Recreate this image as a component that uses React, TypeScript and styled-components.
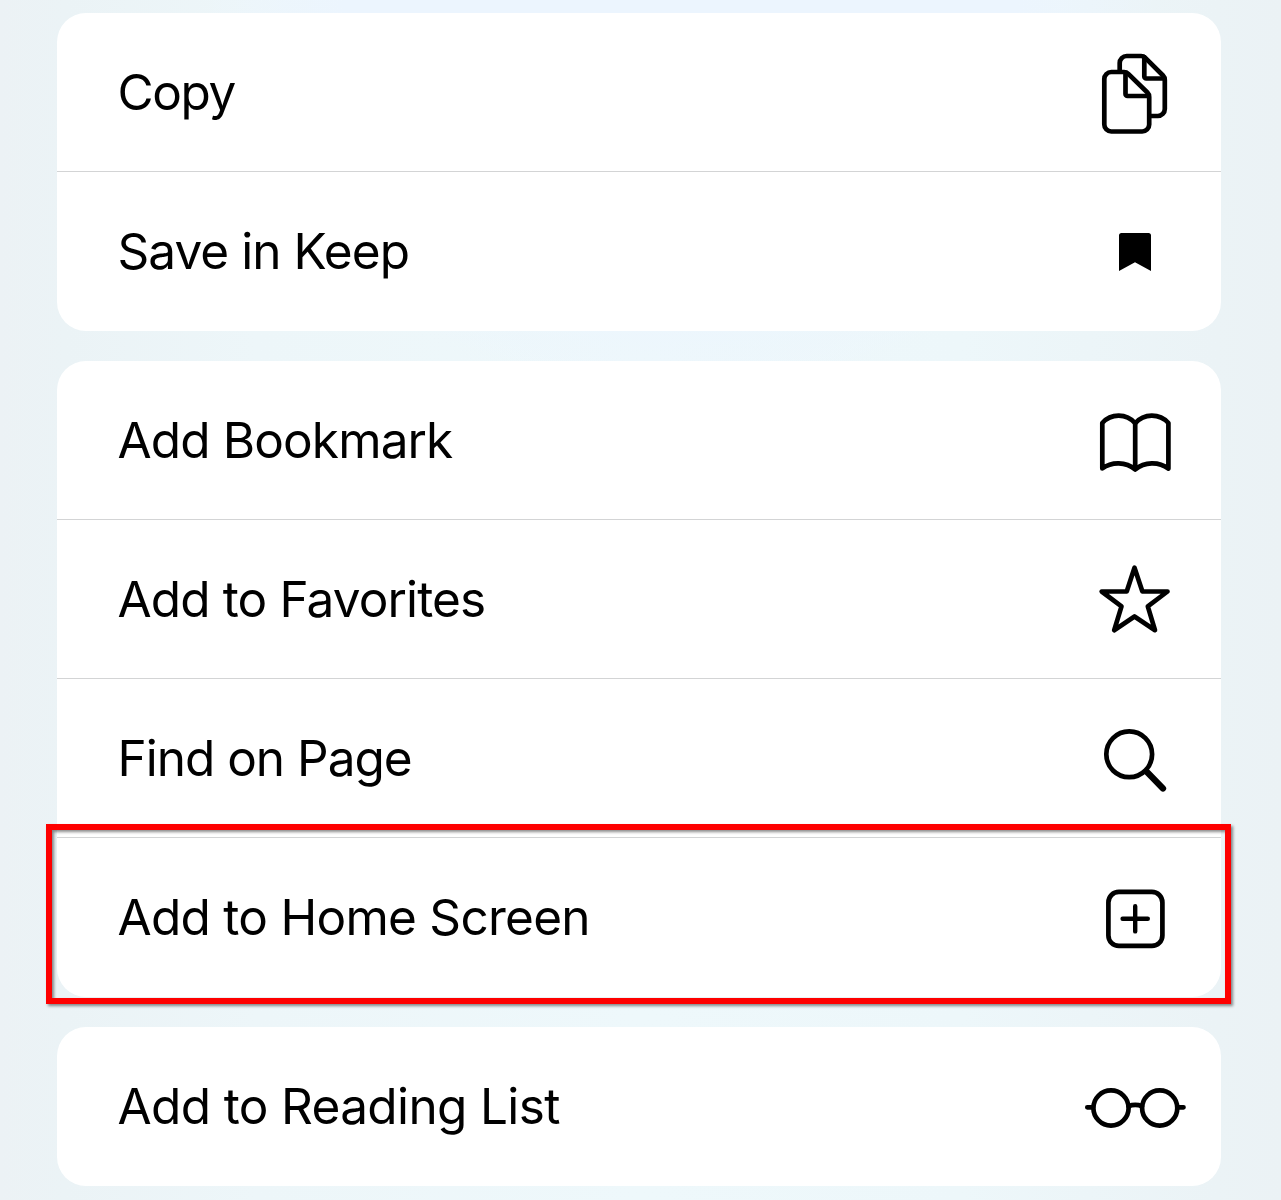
import React from "react";
import styled, { createGlobalStyle } from "styled-components";

const GlobalStyle = createGlobalStyle`
  * { box-sizing: border-box; }
  body { margin: 0; background: #edf5f8; }
`;

const Sheet = styled.main`
  display: flex;
  flex-direction: column;
  gap: 30px;
  height: 1200px;
  padding: 13px 60px 14px 57px;
  overflow: hidden;
  background:
    radial-gradient(ellipse 480px 400px at 680px 0, #ecf5fe 0%, #ecf5fe 70%, rgba(236, 245, 254, 0) 100%),
    linear-gradient(90deg, #ecf2f5 0%, #ebf3f6 5%, #edf6f9 20%, #eef8fb 50%, #edf7fa 75%, #ebf3f6 95%, #ebf2f5 100%);
  font-family: Inter, "Liberation Sans", sans-serif;
  color: #000;
`;

const Group = styled.section`
  flex: none;
  border-radius: 29px;
  background: #fff;
`;

const Row = styled.div`
  position: relative;
  display: flex;
  align-items: flex-start;
  justify-content: space-between;
  height: 159px;
  padding: 0 31px 0 60.5px;
  border-bottom: 1px solid #d3d4d5;

  &:last-child { border-bottom-color: transparent; }
`;

const Label = styled.span<{ $spacing: number }>`
  font-size: 49.5px;
  line-height: 158px;
  letter-spacing: ${(p) => p.$spacing}px;
  white-space: nowrap;
`;

const Glyph = styled.svg`
  flex: none;
  width: 110px;
  height: 158px;
  fill: none;
  stroke: #000;
  stroke-width: 4.7;
  stroke-linecap: round;
  stroke-linejoin: round;
`;

const Highlight = styled.div`
  position: absolute;
  inset: -14px -10px -8px -11px;
  border: 6px solid #fe0000;
  filter: drop-shadow(2px 2px 1.5px rgba(0, 0, 0, 0.45));
  pointer-events: none;
`;

const icons: Record<string, { top: number; art: React.ReactNode }> = {
  copy: {
    top: 27,
    art: (
      <>
        <path d="M39.7 30V23a7 7 0 0 1 7-7H61q2.500 0 4.300 1.800L83 35.500q1.800 1.800 1.800 4.500V69a7 7 0 0 1-7 7H71" />
        <path d="M64.300 17V36.500a2 2 0 0 0 2 2H84" />
        <path d="M31.300 32H44q2.500 0 4.300 1.800L67.400 52.500q1.800 1.800 1.800 4.500V84.500a7 7 0 0 1-7 7H31.300a7 7 0 0 1-7-7V39a7 7 0 0 1 7-7Z" />
        <path d="M45.500 33V54a2 2 0 0 0 2 2H68.500" />
      </>
    ),
  },
  keep: {
    top: 38,
    art: <path fill="#000" stroke="none" d="M41.500 23H68.500a2.500 2.500 0 0 1 2.500 2.500V61L55 52.300 39 61V25.500a2.500 2.500 0 0 1 2.500-2.500Z" />,
  },
  book: {
    top: 34,
    art: (
      <>
        <path d="M55.200 28.300C46.500 18.200 31 18.200 22.300 28V73.500C31.500 66.500 46 66.500 55.200 74.500C64.500 66.500 79 66.500 88.400 73.500V28C79.500 18.200 64 18.200 55.200 28.300Z" />
        <path d="M55.200 28V74" />
      </>
    ),
  },
  star: {
    top: 30,
    art: <path d="M54.500 17.700L62.300 41.300 87.500 41.500 67.800 56.400 75 80.200 54.500 66.500 34.200 80.200 41.500 56.400 21.700 41.500 46.800 41.300Z" />,
  },
  search: {
    top: 36,
    art: (
      <>
        <circle cx="49.200" cy="39.300" r="22.900" strokeWidth="4.700" />
        <path d="M67 57L83 73.500" strokeWidth="6.300" />
      </>
    ),
  },
  plus: {
    top: 32,
    art: (
      <>
        <rect x="28.400" y="21.900" width="54" height="54" rx="10.500" />
        <path d="M42.600 48.800H67.800M55.200 36.200V61.400" strokeWidth="4.400" />
      </>
    ),
  },
  glasses: {
    top: 43,
    art: (
      <>
        <circle cx="31" cy="38" r="17.600" />
        <circle cx="79.700" cy="38" r="17.600" />
        <path d="M48.500 36.200Q55.300 33.700 62 36.200M7.300 37.300H13M97.800 37.300H103.500" />
      </>
    ),
  },
};

const groups = [
  [
    { label: "Copy", icon: "copy", spacing: -1.4 },
    { label: "Save in Keep", icon: "keep", spacing: -0.95 },
  ],
  [
    { label: "Add Bookmark", icon: "book", spacing: -0.87 },
    { label: "Add to Favorites", icon: "star", spacing: -0.87 },
    { label: "Find on Page", icon: "search", spacing: -1 },
    { label: "Add to Home Screen", icon: "plus", spacing: -0.73, highlighted: true },
  ],
  [{ label: "Add to Reading List", icon: "glasses", spacing: -0.64 }],
];

export default function App() {
  return (
    <>
      <GlobalStyle />
      <Sheet>
        {groups.map((items, i) => (
          <Group key={i}>
            {items.map((item) => (
              <Row key={item.label}>
                <Label $spacing={item.spacing}>{item.label}</Label>
                <Glyph viewBox={`0 ${-icons[item.icon].top} 110 158`} aria-hidden="true">
                  {icons[item.icon].art}
                </Glyph>
                {"highlighted" in item && <Highlight />}
              </Row>
            ))}
          </Group>
        ))}
      </Sheet>
    </>
  );
}
